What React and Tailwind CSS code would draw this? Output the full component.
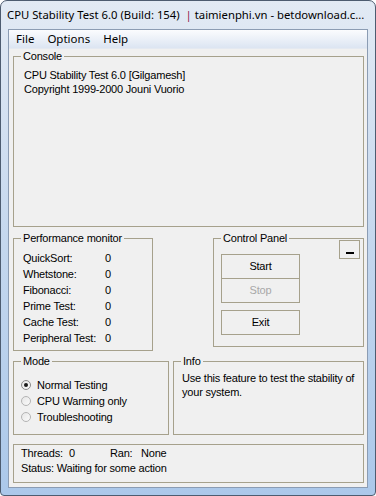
import React from "react";

const ui = { fontFamily: '"Liberation Sans", Arial, sans-serif' };
const seg = { fontFamily: '"Noto Sans", "Open Sans", sans-serif' };

function Group({ title, className = "", children }) {
  return (
    <div className={"border border-[#a6a18c] " + className}>
      <div className="-mt-[7px] ml-[7px] w-fit px-[2px] bg-[#f0f0f0] leading-[13px]">{title}</div>
      {children}
    </div>
  );
}

function Radio({ checked, label }) {
  return (
    <div className="flex items-center h-[16px]">
      <span
        className={
          "w-[10px] h-[10px] rounded-full border flex items-center justify-center bg-linear-to-br from-[#e6e6e6] to-[#fafafa] " +
          (checked ? "border-[#8a8a8a]" : "border-[#b4b4b4]")
        }
      >
        {checked && <span className="w-[4px] h-[4px] rounded-full bg-[#1a1a1a]" />}
      </span>
      <span className="ml-[6px]">{label}</span>
    </div>
  );
}

function Btn({ children, disabled, className = "" }) {
  return (
    <div
      className={
        "w-[79px] h-[25px] border border-[#a6a18c] bg-[#f0f0f0] flex items-center justify-center " +
        (disabled ? "text-[#a8a8a8] " : "text-black ") +
        className
      }
    >
      {children}
    </div>
  );
}

export default function App() {
  const perf = ["QuickSort:", "Whetstone:", "Fibonacci:", "Prime Test:", "Cache Test:", "Peripheral Test:"];
  return (
    <div className="w-[376px] h-[496px] bg-white">
      <div className="w-full h-full rounded-t-[7px] rounded-b-[4px] border border-[#4d5c70] bg-linear-to-b from-[#e2eaf4] via-[#c4d7ee] to-[#abc8ea] px-[7px] pb-[7px] flex flex-col">
        <div className="h-[28px] -ml-[1px] flex items-center pt-[1px] text-[11.3px] text-black whitespace-nowrap overflow-hidden" style={seg}>
          <span>CPU Stability Test 6.0 (Build: 154)&nbsp;&nbsp;</span>
          <span className="text-[#8b1a4a]">|</span>
          <span>&nbsp;taimienphi.vn - betdownload.c...</span>
        </div>
        <div className="flex-1 border border-[#8b9cb3] bg-[#f0f0f0] flex flex-col">
          <div
            className="h-[19px] flex items-center gap-[13px] pl-[7px] text-[11.5px] text-black bg-linear-to-b from-[#fbfcfe] to-[#dce5f2] border-b border-[#e4e9f1]"
            style={seg}
          >
            <span>File</span>
            <span>Options</span>
            <span>Help</span>
          </div>
          <div className="flex flex-col pl-[4px] pr-[3px] text-[11px] tracking-[-0.2px] text-black" style={ui}>
            <Group title="Console" className="mt-[7px] h-[171px]">
              <div className="pt-[5px] pl-[10px] leading-[14px]">
                <div>CPU Stability Test 6.0 [Gilgamesh]</div>
                <div>Copyright 1999-2000 Jouni Vuorio</div>
              </div>
            </Group>
            <div className="mt-[11px] flex justify-between items-start">
              <Group title="Performance monitor" className="w-[140px] h-[113px]">
                <div className="pt-[5px] pl-[9px]">
                  {perf.map((p) => (
                    <div key={p} className="flex h-[16px] items-center">
                      <span className="w-[82px]">{p}</span>
                      <span>0</span>
                    </div>
                  ))}
                </div>
              </Group>
              <Group title="Control Panel" className="w-[151px] h-[109px]">
                <div className="flex justify-between items-start pl-[7px] pr-[3px]">
                  <div className="mt-[9px] flex flex-col">
                    <Btn>Start</Btn>
                    <Btn disabled className="-mt-px">Stop</Btn>
                    <Btn className="mt-[7px]">Exit</Btn>
                  </div>
                  <div className="-mt-[5px] w-[21px] h-[19px] border border-[#a6a18c] flex items-end justify-center pb-[4px]">
                    <span className="w-[8px] h-[2px] bg-black" />
                  </div>
                </div>
              </Group>
            </div>
            <div className="mt-[10px] flex gap-[4px] items-start">
              <Group title="Mode" className="w-[156px] h-[74px]">
                <div className="pt-[9px] pl-[7px]">
                  <Radio checked label="Normal Testing" />
                  <Radio label="CPU Warming only" />
                  <Radio label="Troubleshooting" />
                </div>
              </Group>
              <Group title="Info" className="w-[191px] h-[74px]">
                <div className="pt-[3px] pl-[8px] leading-[14px]">
                  Use this feature to test the stability of
                  <br />
                  your system.
                </div>
              </Group>
            </div>
            <div className="mt-[9px] h-[39px] border border-[#a6a18c] pt-[1px] pl-[7px] leading-[15px]">
              <div className="flex">
                <span className="w-[48px]">Threads:</span>
                <span className="w-[41px]">0</span>
                <span className="w-[31px]">Ran:</span>
                <span>None</span>
              </div>
              <div>Status: Waiting for some action</div>
            </div>
          </div>
        </div>
      </div>
    </div>
  );
}
